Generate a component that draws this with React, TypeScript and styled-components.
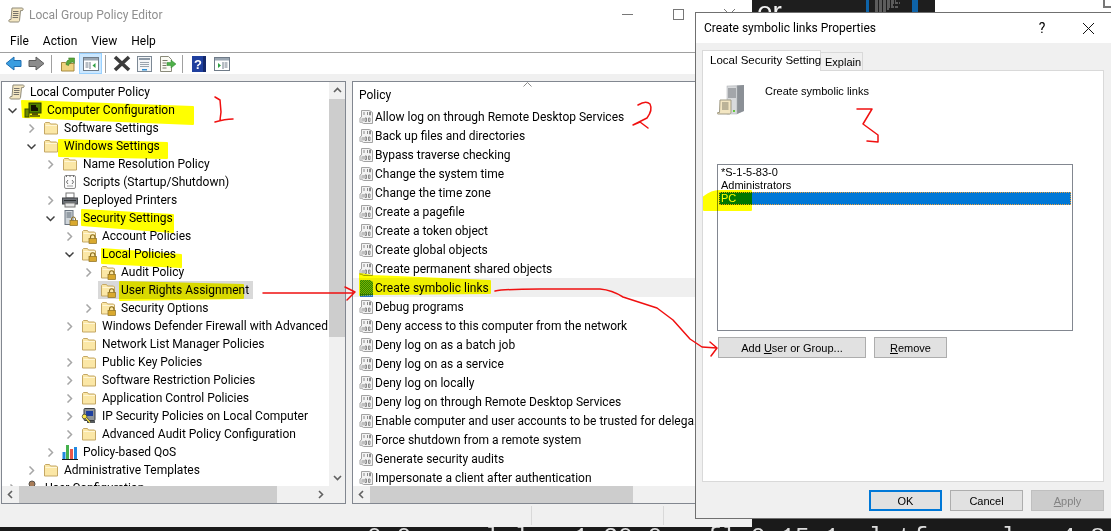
import React from "react";
import styled, { createGlobalStyle } from "styled-components";

const ui = `Roboto, "Noto Sans", sans-serif`;
const classic = `"Liberation Sans", Arial, sans-serif`;

const Global = createGlobalStyle`
  html, body { margin: 0; padding: 0; overflow: hidden; background: #1a1a1a; }
  * { box-sizing: border-box; }
`;

const Desktop = styled.div`
  position: relative;
  width: 1111px;
  height: 531px;
  overflow: hidden;
  background: #1a1a1a;
  font-family: ${ui};
  font-size: 12px;
  color: #000;
`;

const TerminalLine = styled.div`
  position: absolute;
  left: 367px;
  top: 526px;
  font-family: "Liberation Mono", monospace;
  font-size: 24.6px;
  line-height: 1;
  white-space: pre;
  color: #ddd;
`;

const CodeWindow = styled.div`
  position: absolute;
  left: 752px;
  top: 0;
  width: 183px;
  height: 13px;
  overflow: hidden;
  background: #1e1e1e;
  padding-left: 5px;
  color: #f2f2f2;
  font-family: ${classic};
  font-size: 28px;
  line-height: 28px;
`;

const CodeWord = styled.div`
  margin-top: -2px;
`;

const Minimap = styled.svg`
  position: absolute;
  left: 114px;
  top: 0;
`;

const BrowserWindow = styled.div`
  position: absolute;
  left: 935px;
  top: 0;
  width: 176px;
  height: 40px;
  background: #fff;
`;

const CornerMark = styled.div`
  position: absolute;
  left: 168px;
  top: -2px;
  width: 10px;
  height: 10px;
  border: 2px solid #777;
`;

/* editor window */
const Editor = styled.div`
  position: absolute;
  left: 0;
  top: 0;
  width: 752px;
  height: 527px;
  background: #f0f0f0;
  display: flex;
  flex-direction: column;
`;

const TitleBar = styled.div`
  height: 29px;
  background: #fff;
  display: flex;
  align-items: center;
  padding-left: 8px;
  gap: 5px;
  flex: none;
`;

const TitleText = styled.div`
  flex: 1;
  color: #8f8f8f;
  font-size: 12px;
`;

const CaptionButton = styled.div`
  width: 46px;
  height: 29px;
  display: flex;
  align-items: center;
  justify-content: center;
  flex: none;
`;

const MenuBar = styled.div`
  height: 23px;
  background: #fff;
  display: flex;
  align-items: center;
  padding-left: 3px;
  flex: none;
`;

const MenuItem = styled.div`
  padding: 0 7px;
`;

const Toolbar = styled.div`
  height: 22px;
  background: #fff;
  border-top: 1px solid #a0a0a0;
  display: flex;
  align-items: center;
  padding-left: 2px;
  flex: none;
`;

const ToolButton = styled.div<{ $active?: boolean }>`
  width: 23px;
  height: 21px;
  display: flex;
  align-items: center;
  justify-content: center;
  border: 1px solid ${(p) => (p.$active ? "#99d1ff" : "transparent")};
  background: ${(p) => (p.$active ? "#cce8ff" : "transparent")};
`;

const ToolSep = styled.div`
  width: 1px;
  height: 18px;
  margin: 0 4px 0 3px;
  background: #a0a0a0;
`;

const Workspace = styled.div`
  flex: 1;
  min-height: 0;
  display: flex;
  gap: 6px;
  padding: 7px 6px 0 1px;
`;

const Pane = styled.div<{ $width?: number }>`
  ${(p) => (p.$width ? `width: ${p.$width}px; flex: none;` : "flex: 1; min-width: 0;")}
  border: 1px solid #828790;
  background: #fff;
  display: flex;
  flex-direction: column;
  overflow: hidden;
`;

const PaneBody = styled.div`
  flex: 1;
  min-height: 0;
  display: flex;
`;

const Tree = styled.div`
  flex: 1;
  min-width: 0;
  overflow: hidden;
  padding-top: 1px;
`;

const TreeRow = styled.div`
  height: 18px;
  display: flex;
  align-items: center;
  white-space: nowrap;
`;

const Indent = styled.div<{ $level: number }>`
  width: ${(p) => p.$level * 19 + 1}px;
  flex: none;
  display: flex;
  justify-content: flex-end;
  padding-right: 5px;
`;

const TreeNode = styled.div<{ $selected?: boolean }>`
  display: flex;
  align-items: center;
  gap: 5px;
  height: 18px;
  padding: 0 4px 0 2px;
  background: ${(p) => (p.$selected ? "#d9d9d9" : "transparent")};
`;

const VScroll = styled.div`
  width: 16px;
  flex: none;
  background: #f0f0f0;
  display: flex;
  flex-direction: column;
  align-items: stretch;
`;

const ScrollButton = styled.div<{ $h?: number }>`
  height: ${(p) => p.$h ?? 17}px;
  width: 17px;
  flex: none;
  display: flex;
  align-items: center;
  justify-content: center;
`;

const VThumb = styled.div<{ $h: number }>`
  height: ${(p) => p.$h}px;
  background: #cdcdcd;
  flex: none;
`;

const Filler = styled.div`
  flex: 1;
`;

const HScroll = styled.div`
  height: 17px;
  flex: none;
  background: #f0f0f0;
  display: flex;
  align-items: stretch;
`;

const HThumb = styled.div<{ $w: number }>`
  width: ${(p) => p.$w}px;
  background: #cdcdcd;
  flex: none;
`;

const ArrowEnd = styled.div<{ $right: number }>`
  width: 17px;
  margin-right: ${(p) => p.$right}px;
  display: flex;
  align-items: center;
  justify-content: center;
`;

const ListHeader = styled.div`
  position: relative;
  height: 25px;
  flex: none;
  padding: 5px 0 0 6px;
  line-height: 16px;
`;

const SortMark = styled.svg`
  position: absolute;
  left: 170px;
  top: 0;
`;

const PolicyList = styled.div`
  flex: 1;
  min-height: 0;
  overflow: hidden;
`;

const PolicyRow = styled.div<{ $selected?: boolean }>`
  height: 19px;
  display: flex;
  align-items: center;
  gap: 2px;
  padding-left: 6px;
  white-space: nowrap;
  background: ${(p) => (p.$selected ? "#efefef" : "transparent")};
`;

const StatusBar = styled.div`
  height: 23px;
  flex: none;
  display: flex;
  padding: 2px 0;
`;

const StatusCell = styled.div<{ $w: number }>`
  width: ${(p) => p.$w}px;
  flex: none;
  border-right: 1px solid #d9d9d9;
`;

/* properties dialog */
const Dialog = styled.div`
  position: absolute;
  left: 695px;
  top: 12px;
  width: 416px;
  height: 507px;
  border: 1px solid #707070;
  border-right: none;
  background: #f0f0f0;
  display: flex;
  flex-direction: column;
`;

const DialogTitle = styled.div`
  height: 30px;
  flex: none;
  background: #fff;
  display: flex;
  align-items: center;
  padding-left: 8px;
`;

const DialogTitleText = styled.div`
  flex: 1;
`;

const HelpMark = styled.div`
  width: 46px;
  text-align: center;
  font-size: 14px;
  padding-right: 0;
`;

const DialogBody = styled.div`
  flex: 1;
  min-height: 0;
  padding: 7px 7px 0 6px;
  display: flex;
  flex-direction: column;
  font-family: ${classic};
  font-size: 11px;
`;

const TabStrip = styled.div`
  display: flex;
  align-items: flex-end;
  height: 21px;
  margin-bottom: -1px;
  flex: none;
`;

const Tab = styled.div<{ $active?: boolean }>`
  position: relative;
  z-index: ${(p) => (p.$active ? 1 : 0)};
  width: ${(p) => (p.$active ? 119 : 42)}px;
  height: ${(p) => (p.$active ? 21 : 19)}px;
  background: ${(p) => (p.$active ? "#fff" : "#f0f0f0")};
  border: 1px solid #d9d9d9;
  border-bottom: ${(p) => (p.$active ? "none" : "1px solid #d9d9d9")};
  border-left: ${(p) => (p.$active ? "1px solid #d9d9d9" : "none")};
  padding: ${(p) => (p.$active ? "3px 0 0 7px" : "3px 0 0 4px")};
  line-height: 13px;
  font-size: ${(p) => (p.$active ? 11.5 : 11)}px;
  white-space: nowrap;
`;

const TabPanel = styled.div`
  height: 412px;
  flex: none;
  background: #fff;
  border: 1px solid #d9d9d9;
  padding: 13px 0 0 14px;
`;

const SettingHead = styled.div`
  display: flex;
  gap: 18px;
  height: 31px;
`;

const SettingName = styled.div`
  padding-top: 1px;
  line-height: 13px;
`;

const AccountList = styled.div`
  width: 356px;
  height: 167px;
  margin-top: 49px;
  border: 1px solid #828790;
  padding: 1px;
`;

const AccountItem = styled.div<{ $selected?: boolean }>`
  height: 13px;
  line-height: 13px;
  padding-left: 2px;
  color: ${(p) => (p.$selected ? "#fff" : "#000")};
  background: ${(p) => (p.$selected ? "#0078d7" : "transparent")};
  outline: ${(p) => (p.$selected ? "1px dotted #e8a040" : "none")};
  outline-offset: -1px;
`;

const ButtonRow = styled.div<{ $end?: boolean }>`
  display: flex;
  gap: 8px;
  justify-content: ${(p) => (p.$end ? "flex-end" : "flex-start")};
`;

const AccountButtons = styled(ButtonRow)`
  margin: 6px 0 0 1px;
`;

const DialogFooter = styled(ButtonRow)`
  margin-top: 8px;
`;

const PushButton = styled.div<{ $w: number; $default?: boolean; $disabled?: boolean }>`
  width: ${(p) => p.$w}px;
  height: 21px;
  display: flex;
  align-items: center;
  justify-content: center;
  background: ${(p) => (p.$disabled ? "#cccccc" : "#e1e1e1")};
  color: ${(p) => (p.$disabled ? "#838383" : "#000")};
  border: ${(p) => (p.$default ? "2px solid #0078d7" : p.$disabled ? "1px solid #bfbfbf" : "1px solid #adadad")};
`;

/* things drawn over the screenshot by hand */
const Marker = styled.svg`
  position: absolute;
  left: 0;
  top: 0;
  mix-blend-mode: multiply;
  pointer-events: none;
`;

const RedInk = styled.svg`
  position: absolute;
  left: 0;
  top: 0;
  pointer-events: none;
`;

/* ---- icons ---- */
const Sheet = styled.svg`
  flex: none;
  display: block;
`;

const Chevron = ({ open }: { open?: boolean }) => (
  <Sheet width="9" height="9" viewBox="0 0 9 9">
    {open ? (
      <polyline points="0.5,2.5 4.5,6.5 8.5,2.5" fill="none" stroke="#404040" strokeWidth="1.5" />
    ) : (
      <polyline points="2.5,0.5 6.5,4.5 2.5,8.5" fill="none" stroke="#a6a6a6" strokeWidth="1.5" />
    )}
  </Sheet>
);

const ScrollGlyph = ({ dir }: { dir: "up" | "down" | "left" | "right" }) => {
  const pts = {
    up: "1,6 4.5,2.5 8,6",
    down: "1,3 4.5,6.5 8,3",
    left: "6,1 2.5,4.5 6,8",
    right: "3,1 6.5,4.5 3,8",
  }[dir];
  return (
    <Sheet width="9" height="9" viewBox="0 0 9 9">
      <polyline points={pts} fill="none" stroke="#606060" strokeWidth="1.6" />
    </Sheet>
  );
};

const FolderShape = () => (
  <>
    <path d="M1.5 14V3.5l1-1h4l1 1.5h6l1 1V14z" fill="#fbe7a6" stroke="#c4a764" />
    <path d="M2.5 5.5h11.5" stroke="#fff6d6" fill="none" />
  </>
);

const FolderIcon = () => (
  <Sheet width="16" height="16" viewBox="0 0 16 16">
    <FolderShape />
  </Sheet>
);

const LockFolderIcon = () => (
  <Sheet width="16" height="16" viewBox="0 0 16 16">
    <FolderShape />
    <path d="M9.5 10.5V9a2.2 2.2 0 0 1 4.4 0v1.5" fill="none" stroke="#8a6d1f" strokeWidth="1.1" />
    <rect x="8" y="10.5" width="7.5" height="5" fill="#d9a92e" stroke="#8a6d1f" strokeWidth="0.7" />
  </Sheet>
);

const ScrollIcon = () => (
  <Sheet width="16" height="16" viewBox="0 0 16 16">
    <path
      d="M4 1h10c1 0 1.4 1 1 2l-1 .6h-1.5l-1 10c-.2 1-.8 1.4-1.5 1.4H2c-1 0-1.5-1-1-2l1-.5h1z"
      fill="#f3e6c2"
      stroke="#8f8a78"
    />
    <path d="M5 4.5h5.5M5 6.5h5.5M4.8 8.5h5.5M4.6 10.5h5.5" stroke="#77736a" />
  </Sheet>
);

const ComputerIcon = () => (
  <Sheet width="18" height="16" viewBox="0 0 18 16">
    <rect x="5" y="1" width="12" height="10" fill="#4e7f34" stroke="#2c3a26" />
    <path d="M7 3h5v2l2 1v3H7z" fill="#111" />
    <rect x="8" y="11" width="6" height="2" fill="#555" />
    <rect x="6" y="13" width="10" height="2" fill="#7a7a7a" />
    <rect x="1" y="7" width="4" height="8" fill="#6b8a52" stroke="#3a4a30" />
  </Sheet>
);

const ScriptsIcon = () => (
  <Sheet width="16" height="16" viewBox="0 0 16 16">
    <rect x="2.5" y="1.5" width="11" height="13" rx="1.5" fill="#fbfbfb" stroke="#8c8c8c" />
    <path d="M4.5 1v2M8 1v2M11.5 1v2" stroke="#707070" />
    <path d="M6 6L4.5 8 6 10M10 6l1.5 2L10 10" fill="none" stroke="#6e6e6e" />
    <path d="M5 12h6" stroke="#a0a0a0" />
  </Sheet>
);

const PrinterIcon = () => (
  <Sheet width="16" height="16" viewBox="0 0 16 16">
    <rect x="4" y="1" width="8" height="5" fill="#fff" stroke="#777" />
    <rect x="0.5" y="6" width="15" height="6" fill="#6c7076" stroke="#44474b" />
    <rect x="2" y="8" width="12" height="1" fill="#2e3134" />
    <rect x="3" y="11" width="10" height="4" fill="#e6e6e6" stroke="#777" />
  </Sheet>
);

const ServerLockIcon = () => (
  <Sheet width="16" height="16" viewBox="0 0 16 16">
    <rect x="3" y="0.5" width="8" height="14" fill="#cfd5da" stroke="#6a7480" />
    <path d="M4.5 3h5M4.5 5h5M4.5 7h5" stroke="#5a6672" />
    <path d="M9.5 10.5V9a2 2 0 0 1 4 0v1.5" fill="none" stroke="#8a6d1f" />
    <rect x="8" y="10.5" width="7.5" height="5" fill="#d9a92e" stroke="#8a6d1f" strokeWidth="0.7" />
  </Sheet>
);

const IpSecIcon = () => (
  <Sheet width="16" height="16" viewBox="0 0 16 16">
    <rect x="3" y="0.5" width="11" height="12" rx="1" fill="#8f9499" stroke="#3a3d40" />
    <rect x="5" y="3" width="7" height="5" fill="#1d3fa0" />
    <rect x="6" y="13" width="8" height="2" fill="#55595d" />
    <circle cx="3.5" cy="8.5" r="2.3" fill="#ffe94a" stroke="#333" strokeWidth="0.7" />
    <path d="M5 10l4 4.5" stroke="#333" strokeWidth="2.4" />
    <path d="M5 10l4 4.5" stroke="#ffe94a" strokeWidth="1.2" />
  </Sheet>
);

const QosIcon = () => (
  <Sheet width="16" height="16" viewBox="0 0 16 16">
    <rect x="0.5" y="8" width="3" height="7.5" fill="#2189e0" />
    <rect x="4" y="1" width="3" height="14.5" fill="#46b14e" />
    <rect x="8" y="5" width="3" height="10.5" fill="#e8584a" />
    <rect x="12" y="3" width="3" height="12.5" fill="#2189e0" />
    <rect x="0" y="15" width="16" height="1" fill="#1a1a1a" />
  </Sheet>
);

const UserIcon = () => (
  <Sheet width="16" height="16" viewBox="0 0 16 16">
    <circle cx="8" cy="4" r="3" fill="#a87c58" stroke="#55504a" />
    <path d="M3 15c0-5 2-7 5-7s5 2 5 7z" fill="#5f6770" />
  </Sheet>
);

const PolicyIcon = () => (
  <Sheet width="14" height="16" viewBox="0 0 14 16">
    <path d="M2.5 1.5h8l3 2v11h-9l-1.5-1H1V9l1.5-1z" fill="#f3f3f3" stroke="#a2a2a2" />
    <path d="M5 3v3M8.5 3v3M10.5 3h1v3h-1zM4 9v3.5M6 9h1.5v3.5H6zM9.5 9h1.5v3.5H9.5z" fill="none" stroke="#8a8a8a" />
    <path d="M1 9.5h2v4H1z" fill="#cfcfcf" />
  </Sheet>
);

const PolicyIconActive = () => (
  <Sheet width="14" height="18" viewBox="0 0 14 18">
    <defs>
      <pattern id="dith" width="2" height="2" patternUnits="userSpaceOnUse">
        <rect width="2" height="2" fill="#2c8a2c" />
        <rect width="1" height="1" fill="#7fae20" />
        <rect x="1" y="1" width="1" height="1" fill="#7fae20" />
      </pattern>
      <pattern id="dithBlue" width="2" height="2" patternUnits="userSpaceOnUse">
        <rect width="2" height="2" fill="#2f78c8" />
        <rect width="1" height="1" fill="#7fb4e8" />
      </pattern>
    </defs>
    <path d="M1 1h10l3 2v11H1z" fill="url(#dith)" />
    <rect x="1" y="14" width="13" height="4" fill="url(#dithBlue)" />
  </Sheet>
);

const BackIcon = ({ fill, stroke, flip }: { fill: string; stroke: string; flip?: boolean }) => (
  <Sheet width="17" height="15" viewBox="0 0 17 15">
    <path
      d={flip ? "M1 4.5h7V1l8 6.5L8 14v-3.500H1z" : "M16 4.5H9V1L1 7.500 9 14v-3.500h7z"}
      fill={fill}
      stroke={stroke}
    />
  </Sheet>
);

const UpFolderIcon = () => (
  <Sheet width="16" height="16" viewBox="0 0 16 16">
    <path d="M1.500 15V6.500h4l1 1h7.500V15z" fill="#f0d480" stroke="#a68a40" />
    <path d="M6 8.500c0-3 1.500-4.500 3.500-5L8.500 2h6v5.500l-1.500-1.500c-2.500 .5-4 1.500-4.500 3.500z" fill="#5aa83a" stroke="#3a7a26" strokeWidth="0.6" />
  </Sheet>
);

const WindowGlyph = ({ side }: { side: "left" | "right" }) => (
  <Sheet width="16" height="14" viewBox="0 0 16 14">
    <rect x="0.500" y="0.500" width="15" height="13" fill="#fff" stroke="#6f7b88" />
    <rect x="1" y="1" width="14" height="2.500" fill="#9aa6b2" />
    {side === "left" ? (
      <>
        <path d="M2.500 6h3M2.500 8h3M2.500 10h3" stroke="#6f7b88" />
        <path d="M7 5v7" stroke="#6f7b88" />
        <path d="M9.500 8.500l3-2.500v5z" fill="#2ea043" />
      </>
    ) : (
      <>
        <path d="M10.500 6h3M10.500 8h3M10.500 10h3" stroke="#6f7b88" />
        <path d="M9 5v7" stroke="#6f7b88" />
        <path d="M7 8.500L4 6v5z" fill="#2ea043" />
      </>
    )}
  </Sheet>
);

const CrossIcon = () => (
  <Sheet width="18" height="17" viewBox="0 0 18 17">
    <path d="M2 2l14 13M16 2L2 15" stroke="#3c3c3c" strokeWidth="3.600" />
  </Sheet>
);

const PropsIcon = () => (
  <Sheet width="15" height="16" viewBox="0 0 15 16">
    <rect x="0.500" y="0.500" width="14" height="15" fill="#f4f6f8" stroke="#7c8894" />
    <rect x="2" y="2" width="11" height="2" fill="#8d99a6" />
    <path d="M3 6.500h9M3 8.500h9M3 10.500h9" stroke="#9aa4ae" />
    <rect x="5" y="13" width="5" height="1.500" fill="#2e8fd6" />
  </Sheet>
);

const ExportIcon = () => (
  <Sheet width="17" height="16" viewBox="0 0 17 16">
    <path d="M1.500 .5h8l3 3v12h-11z" fill="#fbfbf4" stroke="#8a8a7a" />
    <path d="M3.500 4.500h5M3.500 7h4M3.500 9.500h4M3.500 12h4" stroke="#7a7a6a" />
    <path d="M8 6.500h4V4l5 4-5 4v-2.500H8z" fill="#4fb04a" stroke="#2f8a2e" strokeWidth="0.5" />
  </Sheet>
);

const HelpIcon = () => (
  <Sheet width="14" height="16" viewBox="0 0 14 16">
    <rect width="14" height="16" fill="#1f3f9e" />
    <rect x="11" width="3" height="16" fill="#14286b" />
    <text x="6" y="13" fontFamily="Liberation Sans" fontWeight="700" fontSize="13" fill="#fff" textAnchor="middle">
      ?
    </text>
  </Sheet>
);

const ServerBig = () => (
  <Sheet width="30" height="31" viewBox="0 0 30 31">
    <path d="M10 2l17-1v26l-7 3H10z" fill="#c9ccd0" />
    <path d="M20 1.500l7-.5v26l-7 3z" fill="#8b9096" />
    <rect x="10" y="2" width="10" height="28" fill="#d8dadc" stroke="#a7abb0" strokeWidth="0.5" />
    <path d="M11 5h8M11 7h8M11 9h8M11 11h8M11 13h8" stroke="#6e7379" />
    <rect x="16" y="26" width="2" height="2" fill="#62c83c" />
    <path d="M3 16h11v12c0 1-.6 2-1.500 2H1c-1 0-1-1.500 0-1.500h1.500z" fill="#f3e6c2" stroke="#9f9a85" />
    <path d="M5 19h6.500M5 21h6.500M5 23h6.500M5 25h6.500" stroke="#84806e" />
  </Sheet>
);

const nodeIcon = {
  scroll: <ScrollIcon />,
  computer: <ComputerIcon />,
  folder: <FolderIcon />,
  lock: <LockFolderIcon />,
  scripts: <ScriptsIcon />,
  printer: <PrinterIcon />,
  server: <ServerLockIcon />,
  ipsec: <IpSecIcon />,
  qos: <QosIcon />,
  user: <UserIcon />,
};

type Node = {
  level: number;
  icon: keyof typeof nodeIcon;
  label: string;
  open?: boolean;
  leaf?: boolean;
  selected?: boolean;
};

const treeNodes: Node[] = [
  { level: 0, icon: "scroll", label: "Local Computer Policy", leaf: true },
  { level: 1, icon: "computer", label: "Computer Configuration", open: true },
  { level: 2, icon: "folder", label: "Software Settings" },
  { level: 2, icon: "folder", label: "Windows Settings", open: true },
  { level: 3, icon: "folder", label: "Name Resolution Policy" },
  { level: 3, icon: "scripts", label: "Scripts (Startup/Shutdown)", leaf: true },
  { level: 3, icon: "printer", label: "Deployed Printers" },
  { level: 3, icon: "server", label: "Security Settings", open: true },
  { level: 4, icon: "lock", label: "Account Policies" },
  { level: 4, icon: "lock", label: "Local Policies", open: true },
  { level: 5, icon: "lock", label: "Audit Policy" },
  { level: 5, icon: "lock", label: "User Rights Assignment", leaf: true, selected: true },
  { level: 5, icon: "lock", label: "Security Options" },
  { level: 4, icon: "folder", label: "Windows Defender Firewall with Advanced" },
  { level: 4, icon: "folder", label: "Network List Manager Policies", leaf: true },
  { level: 4, icon: "folder", label: "Public Key Policies" },
  { level: 4, icon: "folder", label: "Software Restriction Policies" },
  { level: 4, icon: "folder", label: "Application Control Policies" },
  { level: 4, icon: "ipsec", label: "IP Security Policies on Local Computer" },
  { level: 4, icon: "folder", label: "Advanced Audit Policy Configuration" },
  { level: 3, icon: "qos", label: "Policy-based QoS" },
  { level: 2, icon: "folder", label: "Administrative Templates" },
  { level: 1, icon: "user", label: "User Configuration" },
];

const policies = [
  "Allow log on through Remote Desktop Services",
  "Back up files and directories",
  "Bypass traverse checking",
  "Change the system time",
  "Change the time zone",
  "Create a pagefile",
  "Create a token object",
  "Create global objects",
  "Create permanent shared objects",
  "Create symbolic links",
  "Debug programs",
  "Deny access to this computer from the network",
  "Deny log on as a batch job",
  "Deny log on as a service",
  "Deny log on locally",
  "Deny log on through Remote Desktop Services",
  "Enable computer and user accounts to be trusted for delega...",
  "Force shutdown from a remote system",
  "Generate security audits",
  "Impersonate a client after authentication",
];

const markerShapes = [
  "M22 101L193 107V124L23 117Z",
  "M59 140L167 143V158L59 156Z",
  "M82 210L173 215V232L82 225Z",
  "M102 249L181 255V267L102 263Z",
  "M120 282L243 285V298L120 300Z",
  "M360 274L373 276L490 281V293L373 294L360 295Z",
  "M704 197Q712 191 719 191H751V210H704Z",
];

const inkStrokes = [
  "M215 97L220 100L221 112L220 120M215 122Q225 119 233 119",
  "M638 105Q646 100 650 104Q653 110 647 118L633 125L640 122L648 128",
  "M857 109L872 109L863 124L878 135L878 142L867 141",
  "M263 293H354M345 287L355 292L347 300",
  "M495 291Q505 289 540 289L600 289Q612 290 623 297L657 308L673 320L690 339L702 347L717 348M710 342L717 348L711 356",
];

export default function App() {
  return (
    <Desktop>
      <Global />
      <TerminalLine>{"0.0     l l   1.30.0   fl 0.15.1  l tf     l   4.8.3"}</TerminalLine>
      <CodeWindow>
        <CodeWord>er</CodeWord>
        <Minimap width="55" height="13" viewBox="0 0 55 13">
          <rect x="0" width="3" height="13" fill="#0e63a8" />
          <rect x="46" width="6" height="13" fill="#0e63a8" />
          <path d="M9 1h21M9 3h25M9 5h18M9 7h24M9 9h14M9 11h12" stroke="#9a9a9a" strokeWidth="1" strokeDasharray="3 1" />
        </Minimap>
      </CodeWindow>
      <BrowserWindow>
        <CornerMark />
      </BrowserWindow>

      <Editor>
        <TitleBar>
          <ScrollIcon />
          <TitleText>Local Group Policy Editor</TitleText>
          <CaptionButton>
            <Sheet width="11" height="11" viewBox="0 0 11 11">
              <path d="M0 5.500h11" stroke="#777" />
            </Sheet>
          </CaptionButton>
          <CaptionButton>
            <Sheet width="11" height="11" viewBox="0 0 11 11">
              <rect x="0.500" y="0.500" width="10" height="10" fill="none" stroke="#777" />
            </Sheet>
          </CaptionButton>
          <CaptionButton>
            <Sheet width="11" height="11" viewBox="0 0 11 11">
              <path d="M0 0l11 11M11 0L0 11" stroke="#777" />
            </Sheet>
          </CaptionButton>
        </TitleBar>
        <MenuBar>
          <MenuItem>File</MenuItem>
          <MenuItem>Action</MenuItem>
          <MenuItem>View</MenuItem>
          <MenuItem>Help</MenuItem>
        </MenuBar>
        <Toolbar>
          <ToolButton>
            <BackIcon fill="#3b9ee0" stroke="#1f6eb0" />
          </ToolButton>
          <ToolButton>
            <BackIcon fill="#8c8c8c" stroke="#5c5c5c" flip />
          </ToolButton>
          <ToolSep />
          <ToolButton>
            <UpFolderIcon />
          </ToolButton>
          <ToolButton $active>
            <WindowGlyph side="left" />
          </ToolButton>
          <ToolSep />
          <ToolButton>
            <CrossIcon />
          </ToolButton>
          <ToolButton>
            <PropsIcon />
          </ToolButton>
          <ToolButton>
            <ExportIcon />
          </ToolButton>
          <ToolSep />
          <ToolButton>
            <HelpIcon />
          </ToolButton>
          <ToolButton>
            <WindowGlyph side="right" />
          </ToolButton>
        </Toolbar>

        <Workspace>
          <Pane $width={345}>
            <PaneBody>
              <Tree>
                {treeNodes.map((n) => (
                  <TreeRow key={n.label}>
                    <Indent $level={n.level}>{n.level > 0 && !n.leaf && <Chevron open={n.open} />}</Indent>
                    <TreeNode $selected={n.selected}>
                      {nodeIcon[n.icon]}
                      <span>{n.label}</span>
                    </TreeNode>
                  </TreeRow>
                ))}
              </Tree>
              <VScroll>
                <ScrollButton>
                  <ScrollGlyph dir="up" />
                </ScrollButton>
                <VThumb $h={238} />
                <Filler />
                <ScrollButton>
                  <ScrollGlyph dir="down" />
                </ScrollButton>
              </VScroll>
            </PaneBody>
            <HScroll>
              <ScrollButton>
                <ScrollGlyph dir="left" />
              </ScrollButton>
              <HThumb $w={258} />
              <Filler />
              <ArrowEnd $right={16}>
                <ScrollGlyph dir="right" />
              </ArrowEnd>
            </HScroll>
          </Pane>

          <Pane>
            <ListHeader>
              Policy
              <SortMark width="9" height="5" viewBox="0 0 9 5">
                <polyline points="0.500,4.500 4.500,0.500 8.500,4.500" fill="none" stroke="#8a8a8a" />
              </SortMark>
            </ListHeader>
            <PolicyList>
              {policies.map((label) => {
                const active = label === "Create symbolic links";
                return (
                  <PolicyRow key={label} $selected={active}>
                    {active ? <PolicyIconActive /> : <PolicyIcon />}
                    <span>{label}</span>
                  </PolicyRow>
                );
              })}
            </PolicyList>
            <HScroll>
              <ScrollButton>
                <ScrollGlyph dir="left" />
              </ScrollButton>
              <HThumb $w={263} />
              <Filler />
            </HScroll>
          </Pane>
        </Workspace>

        <StatusBar>
          <StatusCell $w={532} />
          <StatusCell $w={132} />
        </StatusBar>
      </Editor>

      <Dialog>
        <DialogTitle>
          <DialogTitleText>Create symbolic links Properties</DialogTitleText>
          <HelpMark>?</HelpMark>
          <CaptionButton>
            <Sheet width="11" height="11" viewBox="0 0 11 11">
              <path d="M0 0l11 11M11 0L0 11" stroke="#111" />
            </Sheet>
          </CaptionButton>
        </DialogTitle>
        <DialogBody>
          <TabStrip>
            <Tab $active>Local Security Setting</Tab>
            <Tab>Explain</Tab>
          </TabStrip>
          <TabPanel>
            <SettingHead>
              <ServerBig />
              <SettingName>Create symbolic links</SettingName>
            </SettingHead>
            <AccountList>
              <AccountItem>*S-1-5-83-0</AccountItem>
              <AccountItem>Administrators</AccountItem>
              <AccountItem $selected>PC</AccountItem>
            </AccountList>
            <AccountButtons>
              <PushButton $w={148}>
                <span>
                  Add <u>U</u>ser or Group...
                </span>
              </PushButton>
              <PushButton $w={73}>
                <span>
                  <u>R</u>emove
                </span>
              </PushButton>
            </AccountButtons>
          </TabPanel>
          <DialogFooter $end>
            <PushButton $w={73} $default>
              OK
            </PushButton>
            <PushButton $w={73}>Cancel</PushButton>
            <PushButton $w={73} $disabled>
              <span>
                <u>A</u>pply
              </span>
            </PushButton>
          </DialogFooter>
        </DialogBody>
      </Dialog>

      <Marker width="1111" height="531" viewBox="0 0 1111 531">
        {markerShapes.map((d) => (
          <path key={d} d={d} fill="#ffff00" stroke="#ffff00" strokeWidth="2" strokeLinejoin="round" />
        ))}
      </Marker>
      <RedInk width="1111" height="531" viewBox="0 0 1111 531">
        {inkStrokes.map((d) => (
          <path key={d} d={d} fill="none" stroke="#f01010" strokeWidth="1.500" strokeLinecap="round" strokeLinejoin="round" />
        ))}
      </RedInk>
    </Desktop>
  );
}
